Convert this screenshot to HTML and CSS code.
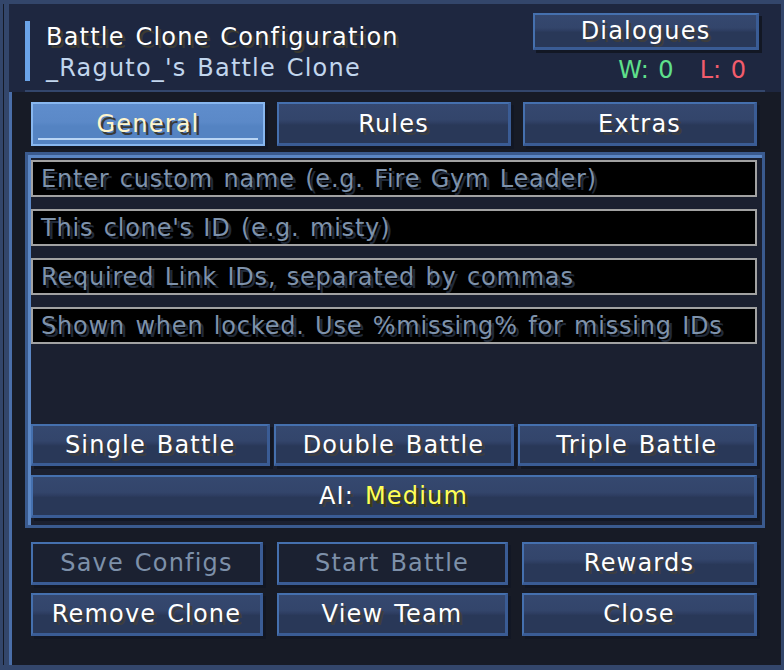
FILE: index.html
```html
<!DOCTYPE html>
<html lang="en">
<head>
    <meta charset="UTF-8">
    <meta name="viewport" content="width=device-width, initial-scale=1.0">
    <title>Battle Clone Configuration</title>
    <link rel="stylesheet" href="styles.css">
</head>
<body>
    <div class="frame">
        <header class="header">
            <div class="header-main">
                <div class="titles">
                    <div class="title">Battle Clone Configuration</div>
                    <div class="subtitle">_Raguto_'s Battle Clone</div>
                </div>
                <div class="header-side">
                    <button class="btn dialogues">Dialogues</button>
                    <div class="record">
                        <span class="wins">W: 0</span>
                        <span class="losses">L: 0</span>
                    </div>
                </div>
            </div>
            <div class="header-rule"></div>
        </header>

        <main class="body">
            <nav class="tabs">
                <button class="btn tab active">General</button>
                <button class="btn tab">Rules</button>
                <button class="btn tab">Extras</button>
            </nav>

            <section class="panel">
                <div class="fields">
                    <div class="field">Enter custom name (e.g. Fire Gym Leader)</div>
                    <div class="field">This clone's ID (e.g. misty)</div>
                    <div class="field">Required Link IDs, separated by commas</div>
                    <div class="field">Shown when locked. Use %missing% for missing IDs</div>
                </div>
                <div class="battle-types">
                    <button class="btn">Single Battle</button>
                    <button class="btn">Double Battle</button>
                    <button class="btn">Triple Battle</button>
                </div>
                <button class="btn ai">AI:&nbsp;<span class="ai-level">Medium</span></button>
            </section>

            <div class="actions">
                <button class="btn" disabled>Save Configs</button>
                <button class="btn" disabled>Start Battle</button>
                <button class="btn">Rewards</button>
                <button class="btn">Remove Clone</button>
                <button class="btn">View Team</button>
                <button class="btn">Close</button>
            </div>
        </main>
    </div>
</body>
</html>
```

FILE: styles.css
```css
* {
    box-sizing: border-box;
}
body {
    margin: 0;
    background-color: #171b26;
    font-family: "DejaVu Sans", sans-serif;
    font-size: 24px;
    letter-spacing: 1.2px;
    word-spacing: 2px;
    color: #fff;
}
.frame {
    width: 784px;
    height: 670px;
    display: flex;
    flex-direction: column;
    border: solid #33466b;
    border-width: 4px 3px 5px 3px;
    padding-left: 6px;
    box-shadow: inset 1px 0 0 #141925, inset 6px 0 0 #33466b;
}

/* header */
.header {
    height: 88px;
    background-color: #1e2740;
    display: flex;
    flex-direction: column;
}
.header-main {
    flex: 1;
    display: flex;
    justify-content: space-between;
    align-items: flex-start;
    padding: 0 22px 0 16px;
}
.titles {
    margin-top: 17px;
    height: 60px;
    border-left: 5px solid #6aa3e8;
    padding-left: 16px;
}
.title {
    padding-top: 1px;
    line-height: 30px;
    text-shadow: 3px 3px 0 #3c3a30;
}
.subtitle {
    line-height: 33px;
    color: #c2d6ee;
}
.header-side {
    margin-top: 9px;
    display: flex;
    flex-direction: column;
    align-items: flex-end;
}
.dialogues {
    width: 226px;
    height: 37px;
    padding-top: 2px;
}
.record {
    margin-top: 8px;
    padding-right: 13px;
    display: flex;
    gap: 26px;
    line-height: 24px;
    letter-spacing: 0;
}
.wins {
    color: #5fe08c;
}
.losses {
    color: #f25c6c;
}
.header-rule {
    height: 2px;
    margin: 0 16px;
    background-color: #33466b;
}

/* buttons */
.btn {
    font: inherit;
    letter-spacing: inherit;
    word-spacing: inherit;
    color: #fff;
    text-shadow: 3px 3px 0 #3e3e3e;
    display: flex;
    align-items: center;
    justify-content: center;
    padding: 0;
    white-space: nowrap;
    border: 2px solid #4570ae;
    border-right: 3px solid #3a5c95;
    border-bottom: 3px solid #3a5c95;
    background: linear-gradient(#35486f 0, #33456b 40%, #2e3e62 48%, #293858 54%, #293858 100%);
    box-shadow: 3px 3px 0 #121724;
    cursor: pointer;
}
.btn:disabled {
    color: #7d90a9;
    text-shadow: none;
    background: #1b2131;
    cursor: default;
}
.tab.active {
    color: #fff5cc;
    text-shadow: 3px 3px 0 #3a3a38;
    border: 2px solid #88b7ef;
    background:
        linear-gradient(#b9d5f5, #b9d5f5) no-repeat center bottom 4px / calc(100% - 10px) 2px,
        linear-gradient(#5f8dcc 0, #5b89c8 45%, #5483c2 55%, #5483c2 100%);
}

/* body */
.body {
    flex: 1;
    border-left: 3px solid #4a6ea8;
    padding: 10px 16px 0 13px;
    display: flex;
    flex-direction: column;
}
.tabs {
    display: grid;
    grid-template-columns: repeat(3, 1fr);
    gap: 12px;
    height: 44px;
    margin: 0 8px 0 6px;
}
.panel {
    margin-top: 6px;
    height: 376px;
    border: 3px solid #3a5a8e;
    box-shadow: inset 3px 3px 0 #5b86c4;
    background-color: #1b2030;
    padding: 5px 5px 7px 3px;
    display: flex;
    flex-direction: column;
}
.fields {
    display: flex;
    flex-direction: column;
    gap: 12px;
}
.field {
    height: 37px;
    border: 2px solid #a2a2a2;
    background-color: #000;
    padding-left: 8px;
    display: flex;
    align-items: center;
    color: #7e92ab;
    text-shadow: 3px 3px 0 #222b3a;
    letter-spacing: 0.8px;
    white-space: nowrap;
    overflow: hidden;
}
.battle-types {
    margin-top: auto;
    display: grid;
    grid-template-columns: repeat(3, 1fr);
    gap: 4px;
    height: 42px;
}
.ai {
    margin-top: 9px;
    height: 43px;
}
.ai-level {
    color: #ffff55;
    text-shadow: 3px 3px 0 #3f3f15;
}
.actions {
    margin: 14px 8px 0 6px;
    display: grid;
    grid-template-columns: 232px 231px 235px;
    grid-auto-rows: 43px;
    gap: 8px 14px;
}
```
